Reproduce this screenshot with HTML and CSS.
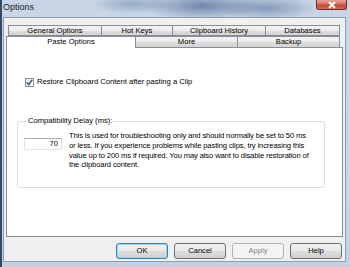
FILE: index.html
```html
<!DOCTYPE html>
<html>
<head>
<meta charset="utf-8">
<link rel="stylesheet" href="styles.css">
</head>
<body>
<div class="window">
  <div class="titlebar">
    <span class="title">Options</span>
    <div class="close">
      <svg width="10" height="8" viewBox="0 0 10 8"><path d="M2 1 L8 7 M8 1 L2 7" stroke="#fff" stroke-width="2" fill="none"/></svg>
    </div>
  </div>
  <div class="client">
    <div class="tabs">
      <div class="row row1">
        <div class="tab w93">General Options</div>
        <div class="tab w71">Hot Keys</div>
        <div class="tab w93">Clipboard History</div>
        <div class="tab w75 last">Databases</div>
      </div>
      <div class="row row2">
        <div class="tab sel w129">Paste Options</div>
        <div class="tab w102">More</div>
        <div class="tab w103 last">Backup</div>
      </div>
      <div class="panel">
        <label class="check-row">
          <span class="checkbox">
            <svg width="7" height="7" viewBox="0 0 7 7"><path d="M0.8 3.6 L2.7 5.6 L6.2 0.9" stroke="#2a4a8a" stroke-width="1.4" fill="none"/></svg>
          </span>
          <span>Restore Clipboard Content after pasting a Clip</span>
        </label>
        <fieldset class="group">
          <legend>Compatibility Delay (ms):</legend>
          <div class="group-body">
            <div class="input">70</div>
            <p class="desc">This is used for troubleshooting only and should normally be set to 50 ms<br>or less. If you experience problems while pasting clips, try increasing this<br>value up to 200 ms if required. You may also want to disable restoration of<br>the clipboard content.</p>
          </div>
        </fieldset>
      </div>
    </div>
    <div class="buttons">
      <div class="btn default">OK</div>
      <div class="btn">Cancel</div>
      <div class="btn disabled">Apply</div>
      <div class="btn">Help</div>
    </div>
  </div>
</div>
</body>
</html>
```
FILE: styles.css
```css
html, body {
  margin: 0;
  padding: 0;
}
body {
  width: 350px;
  height: 267px;
  overflow: hidden;
  font-family: "Liberation Sans", Arial, sans-serif;
  font-size: 7.6px;
  color: #000;
}
.window {
  box-sizing: border-box;
  width: 350px;
  height: 267px;
  display: flex;
  flex-direction: column;
  border-left: 2px solid #34486a;
  padding: 0 4px 5px 1px;
  background:
    radial-gradient(ellipse 60px 14px at 200px 6px, rgba(40,70,120,0.55), rgba(40,70,120,0) 100%),
    radial-gradient(ellipse 40px 10px at 130px 4px, rgba(60,90,140,0.35), rgba(60,90,140,0) 100%),
    radial-gradient(ellipse 50px 12px at 265px 8px, rgba(50,80,130,0.45), rgba(50,80,130,0) 100%),
    linear-gradient(180deg, #c7d5e6 0%, #cbd8e7 60%, #c2d1e3 100%);
}
.titlebar {
  height: 17px;
  display: flex;
  align-items: flex-start;
  justify-content: space-between;
  position: relative;
}
.title {
  font-size: 9px;
  line-height: 12px;
  color: #1a1a1a;
  padding-top: 1px;
}
.close {
  width: 31px;
  height: 10px;
  margin-right: -1px;
  box-sizing: border-box;
  border: 1px solid #7a2a22;
  border-top: none;
  border-radius: 0 0 3px 3px;
  background: linear-gradient(180deg, #e6a39a 0%, #d7715f 45%, #c24a33 55%, #d0674e 100%);
  display: flex;
  align-items: center;
  justify-content: center;
}
.client {
  flex: 1;
  background: #f0f0f0;
  border: 1px solid #8c9db2;
  padding: 7px 2px 0 2px;
  display: flex;
  flex-direction: column;
}
.tabs {
  width: 337px;
  display: flex;
  flex-direction: column;
}
.row {
  display: flex;
  height: 11px;
  align-items: flex-start;
}
.row1 {
  margin-left: 2px;
}
.tab {
  box-sizing: border-box;
  height: 11px;
  line-height: 10px;
  text-align: center;
  border: 1px solid #898c95;
  border-right: none;
  border-bottom: none;
  background: linear-gradient(180deg, #f4f4f4 0%, #ebebeb 50%, #dddddd 51%, #d4d4d4 100%);
  white-space: nowrap;
}
.tab.last {
  border-right: 1px solid #898c95;
}
.row1 .tab {
  border-bottom: 1px solid #898c95;
}
.tab.sel {
  height: 12px;
  background: #fff;
  position: relative;
  z-index: 1;
  line-height: 10px;
}
.w93 { width: 93px; }
.w71 { width: 71px; }
.w75 { width: 75px; }
.w129 { width: 129px; }
.w102 { width: 102px; }
.w103 { width: 103px; }
.panel {
  box-sizing: border-box;
  height: 190px;
  background: #fff;
  border: 1px solid #898c95;
  display: flex;
  flex-direction: column;
  align-items: flex-start;
}
.check-row {
  display: flex;
  align-items: center;
  gap: 3px;
  margin: 29px 0 0 18px;
  line-height: 10px;
}
.checkbox {
  box-sizing: border-box;
  width: 9px;
  height: 9px;
  border: 1px solid #8e8f8f;
  background: linear-gradient(135deg, #e8e8e8, #fdfdfd);
  display: flex;
  align-items: center;
  justify-content: center;
}
.group {
  box-sizing: border-box;
  width: 308px;
  height: 72px;
  margin: 29px 0 0 10px;
  padding: 5px 4px 0 6px;
  border: 1px solid #d5dfe5;
  border-radius: 3px;
  min-width: 0;
}
.group legend {
  padding: 0 1px;
  margin-left: 3px;
  line-height: 10px;
}
.group-body {
  display: flex;
  align-items: flex-start;
  gap: 7px;
}
.input {
  box-sizing: border-box;
  width: 38px;
  height: 12px;
  margin-top: 7px;
  border: 1px solid #abadb3;
  border-left-color: #e2e3ea;
  border-right-color: #dbdfe6;
  border-bottom-color: #e3e9ef;
  text-align: right;
  padding-right: 3px;
  line-height: 10px;
}
.desc {
  margin: 0;
  line-height: 9.8px;
  white-space: nowrap;
  letter-spacing: -0.12px;
}
.buttons {
  display: flex;
  justify-content: flex-end;
  gap: 6px;
  margin-top: 6px;
  padding-right: 1px;
}
.btn {
  box-sizing: border-box;
  width: 52px;
  height: 16px;
  border: 1px solid #707070;
  border-radius: 3px;
  text-align: center;
  line-height: 14px;
  background: linear-gradient(180deg, #f2f2f2 0%, #ebebeb 48%, #dddddd 52%, #cfcfcf 100%);
}
.btn.default {
  border-color: #3c7fb1;
  box-shadow: inset 0 0 0 1px #9ed5f1;
}
.btn.disabled {
  border-color: #adb2b5;
  background: #f4f4f4;
  color: #838383;
}
```
